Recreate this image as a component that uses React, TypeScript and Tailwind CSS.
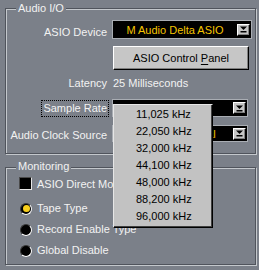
import React from "react";

function Arrow() {
  return (
    <div className="w-[13px] h-[12px] bg-[#c6c6c6] border border-t-white border-l-white border-r-black border-b-black shadow-[inset_-1px_-1px_0_#808080] flex items-center justify-center shrink-0">
      <svg width="7" height="7" viewBox="0 0 7 7">
        <polygon points="0,0.5 7,0.5 3.5,4" fill="#000" />
        <rect x="0.5" y="5" width="6" height="1.5" fill="#000" />
      </svg>
    </div>
  );
}

function Combo({ text, w, h, textClass = "" }: { text: string; w: string; h: string; textClass?: string }) {
  return (
    <div className={`${w} ${h} border border-[#a9adb3] bg-black flex items-center pr-[1px]`}>
      <div className={`flex-1 text-center text-[#f6c500] whitespace-nowrap overflow-hidden ${textClass}`}>{text}</div>
      <Arrow />
    </div>
  );
}

export default function App() {
  const items = ["11,025 kHz", "22,050 kHz", "32,000 kHz", "44,100 kHz", "48,000 kHz", "88,200 kHz", "96,000 kHz"];
  return (
    <div className="relative w-[259px] h-[270px] overflow-hidden bg-[#7b8089] pt-[8px] pl-[5px] font-['Liberation_Sans',Arial,sans-serif] text-[11px] leading-[13px] text-[#f2f2f2]">
      {/* Audio I/O */}
      <div className="relative w-[251px] h-[146px] border border-[#50545c] shadow-[inset_1px_1px_0_#c4c8cc,1px_1px_0_#c4c8cc]">
        <span className="absolute left-[10px] -top-[7px] px-[2px] bg-[#7b8089]">Audio I/O</span>

        <div className="flex mt-[11px]">
          <div className="w-[101px] text-right pt-[6px]">ASIO Device</div>
          <div className="ml-[5px]">
            <Combo text="M Audio Delta ASIO" w="w-[140px]" h="h-[19px]" textClass="pt-[2px]" />
          </div>
        </div>

        <div className="flex mt-[7px]">
          <div className="w-[101px]" />
          <div className="ml-[6px] w-[136px] h-[24px] bg-[#c6c6c6] border border-t-white border-l-white border-r-black border-b-black shadow-[inset_-1px_-1px_0_#808080] flex items-center justify-center text-black">
            <span>
              ASIO Control <span className="underline underline-offset-[2px]">P</span>anel
            </span>
          </div>
        </div>

        <div className="flex mt-[7px]">
          <div className="w-[101px] text-right">Latency</div>
          <div className="ml-[6px]">25 Milliseconds</div>
        </div>

        <div className="flex mt-[9px]">
          <div className="w-[101px] flex justify-end">
            <span className="mt-[1px] -mr-[2px] border border-dotted border-black px-[1px] pt-[1px] pb-[1px]">Sample Rate</span>
          </div>
          <div className="ml-[5px]">
            <Combo text="44,100 kHz" w="w-[136px]" h="h-[18px]" textClass="pt-[1px]" />
          </div>
        </div>

        <div className="flex mt-[8px]">
          <div className="w-[101px] text-right pt-[4px]">Audio Clock Source</div>
          <div className="ml-[5px]">
            <Combo text="M Audio Internal" w="w-[136px]" h="h-[17px]" textClass="pt-[1px] pl-[6px]" />
          </div>
        </div>
      </div>

      {/* Monitoring */}
      <div className="relative mt-[13px] w-[251px] h-[98px] border border-[#50545c] shadow-[inset_1px_1px_0_#c4c8cc,1px_1px_0_#c4c8cc] pl-[13px]">
        <span className="absolute left-[10px] -top-[8px] px-[2px] bg-[#7b8089]">Monitoring</span>

        <div className="flex items-start mt-[9px]">
          <div className="w-[13px] h-[13px] bg-black border border-t-[#4a4a4a] border-l-[#4a4a4a] border-r-[#e8e8e8] border-b-[#e8e8e8] shrink-0" />
          <span className="ml-[5px] mt-[1px] whitespace-nowrap">ASIO Direct Monitoring</span>
        </div>

        <div className="flex flex-col mt-[7px]">
          {[
            { label: "Tape Type", on: true },
            { label: "Record Enable Type", on: false },
            { label: "Global Disable", on: false },
          ].map((r) => (
            <div key={r.label} className="flex items-center h-[21px]">
              <div className="ml-[1px] w-[12px] h-[12px] rounded-full bg-black border border-t-[#3a3a3a] border-l-[#3a3a3a] border-r-white border-b-white flex items-center justify-center shrink-0">
                {r.on && <div className="w-[7px] h-[7px] rounded-full bg-[#f8cf1c]" />}
              </div>
              <span className="ml-[5px] whitespace-nowrap">{r.label}</span>
            </div>
          ))}
        </div>
      </div>

      {/* Dropdown popup */}
      <div className="absolute left-[113px] top-[104px] w-[100px] h-[124px] bg-[#c2c2c2] border border-t-[#e6e6e6] border-l-[#e6e6e6] border-r-black border-b-black shadow-[inset_-1px_-1px_0_#404040] pt-[1px] text-black">
        {items.map((it) => (
          <div key={it} className="h-[17px] flex items-center pl-[22px]">
            {it}
          </div>
        ))}
      </div>
    </div>
  );
}
